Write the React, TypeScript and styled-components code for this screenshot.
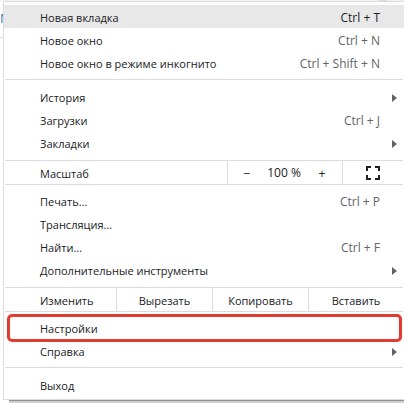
import React from "react";
import styled, { createGlobalStyle } from "styled-components";

const GlobalStyle = createGlobalStyle`
  * { box-sizing: border-box; }
  body {
    margin: 0;
    background: #fff;
    color: #202124;
    font-family: "Open Sans", "Noto Sans", sans-serif;
    font-size: 11px;
    line-height: 23px;
  }
  button { font: inherit; color: inherit; background: none; border: 0; padding: 0; margin: 0; }
`;

const Page = styled.div`
  display: grid;
  grid-template-columns: 3px minmax(0, 1fr);
  grid-template-rows: 1px auto auto;
`;

const TopEdge = styled.div`
  grid-column: 1 / -1;
  display: flex;
  justify-content: flex-end;
  padding-right: 17px;
  background: #f1f1f1;
`;

const TopMark = styled.div`
  width: 8px;
  height: 1px;
  background: #d9d9d9;
`;

const Behind = styled.div`
  height: 37px;
  padding-top: 6px;
  overflow: hidden;
  color: #2878c8;
  font-size: 13px;
  border-bottom: 1px solid #dadce0;
`;

const Menu = styled.div`
  padding-top: 3px;
  border: 1px solid #dadce0;
  border-right: 0;
`;

const MenuShadow = styled.div`
  grid-column: 2;
  height: 3px;
  margin-left: 6px;
  background: #cfcfcf;
  border-top: 1px solid #8f8f8f;
`;

const Group = styled.div<{ $top: number; $bottom: number }>`
  padding: ${(p) => p.$top}px 0 ${(p) => p.$bottom}px;
`;

const Item = styled.button<{ $active?: boolean }>`
  display: flex;
  align-items: center;
  justify-content: space-between;
  width: 100%;
  height: 23px;
  padding: 2px 24px 0 36px;
  text-align: left;
  white-space: nowrap;
  background: ${(p) => (p.$active ? "#e8e8e8" : "transparent")};
`;

const Shortcut = styled.span<{ $active?: boolean }>`
  font-size: 12px;
  color: ${(p) => (p.$active ? "#202124" : "#5f6368")};
`;

const Arrow = styled.svg`
  width: 5px;
  height: 8px;
  margin-right: -17px;
  fill: #5f6368;
`;

const Highlight = styled.div`
  margin: -2px 2px -3px 3px;
  border: 3px solid #e53a30;
  border-radius: 5px;

  ${Item} {
    height: 22px;
    padding: 0 19px 0 30px;
  }
`;

const Line = styled.hr`
  height: 1px;
  margin: 0 1px;
  border: 0;
  background: #dadce0;
`;

const Bar = styled.div<{ $columns: string }>`
  display: grid;
  grid-template-columns: ${(p) => p.$columns};
  height: 25px;
  margin: 0 1px;
  border: solid #dadce0;
  border-width: 1px 0;
`;

const BarLabel = styled.span`
  padding: 1px 0 0 35px;
`;

const BarButton = styled.button`
  border-left: 1px solid #dadce0;
`;

const ZoomControl = styled.div`
  display: grid;
  grid-template-columns: 38px 1fr 40px;
  font-size: 12px;
  text-align: center;
  border-left: 1px solid #dadce0;
`;

const FullScreen = styled(BarButton)`
  display: flex;
  align-items: center;
  justify-content: center;
`;

function MenuItem({ label, keys, active, submenu }: {
  label: string; keys?: string; active?: boolean; submenu?: boolean;
}) {
  return (
    <Item type="button" role="menuitem" $active={active}>
      <span>{label}</span>
      {keys && <Shortcut $active={active}>{keys}</Shortcut>}
      {submenu && <Arrow viewBox="0 0 5 8" aria-hidden="true"><path d="M0 0L5 4L0 8Z" /></Arrow>}
    </Item>
  );
}

export default function App() {
  return (
    <>
      <GlobalStyle />
      <Page>
        <TopEdge><TopMark /></TopEdge>
        <Behind>N</Behind>
        <Menu role="menu">
          <Group $top={0} $bottom={5}>
            <MenuItem label="Новая вкладка" keys="Ctrl + T" active />
            <MenuItem label="Новое окно" keys="Ctrl + N" />
            <MenuItem label="Новое окно в режиме инкогнито" keys="Ctrl + Shift + N" />
          </Group>
          <Line />
          <Group $top={5} $bottom={6}>
            <MenuItem label="История" submenu />
            <MenuItem label="Загрузки" keys="Ctrl + J" />
            <MenuItem label="Закладки" submenu />
          </Group>
          <Bar $columns="minmax(0, 1fr) 115px 61px">
            <BarLabel>Масштаб</BarLabel>
            <ZoomControl>
              <button type="button" aria-label="Уменьшить">−</button>
              <span>100 %</span>
              <button type="button" aria-label="Увеличить">+</button>
            </ZoomControl>
            <FullScreen type="button" aria-label="Во весь экран">
              <svg width="14" height="14" viewBox="0 0 14 14" fill="none" stroke="#202124" strokeWidth="2">
                <path d="M1 5V1H5M9 1H13V5M13 9V13H9M5 13H1V9" />
              </svg>
            </FullScreen>
          </Bar>
          <Group $top={4} $bottom={6}>
            <MenuItem label="Печать…" keys="Ctrl + P" />
            <MenuItem label="Трансляция…" />
            <MenuItem label="Найти…" keys="Ctrl + F" />
            <MenuItem label="Дополнительные инструменты" submenu />
          </Group>
          <Bar $columns="minmax(0, 1fr) 96px 96px 95px">
            <BarLabel>Изменить</BarLabel>
            <BarButton type="button">Вырезать</BarButton>
            <BarButton type="button">Копировать</BarButton>
            <BarButton type="button">Вставить</BarButton>
          </Bar>
          <Group $top={4} $bottom={5}>
            <Highlight><MenuItem label="Настройки" /></Highlight>
            <MenuItem label="Справка" submenu />
          </Group>
          <Line />
          <Group $top={5} $bottom={3}>
            <MenuItem label="Выход" />
          </Group>
        </Menu>
        <MenuShadow />
      </Page>
    </>
  );
}
